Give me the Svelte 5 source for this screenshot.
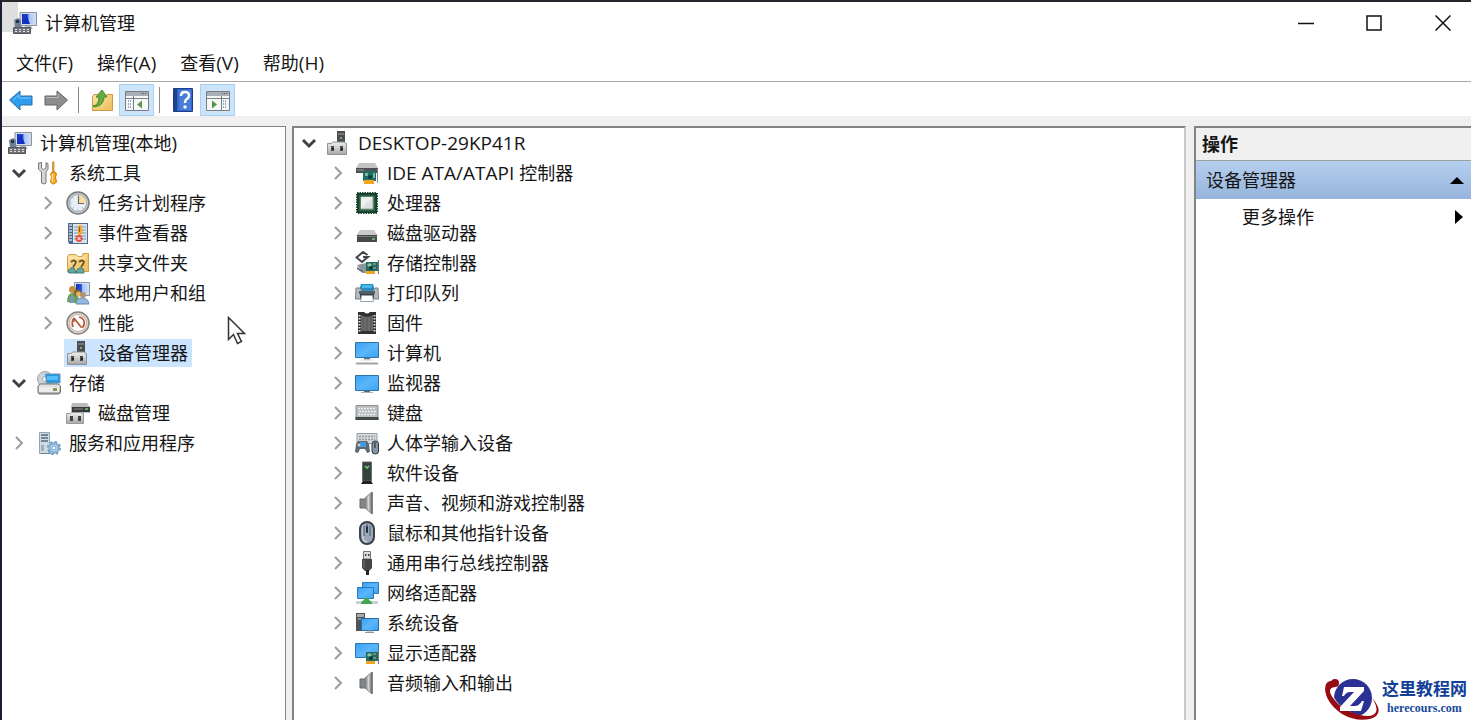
<script>
  let selected = $state('设备管理器');

  const menus = ['文件(F)', '操作(A)', '查看(V)', '帮助(H)'];

  // Latin runs are set one size up beside the Chinese characters.
  const runs = (label) => label.match(/[\x20-\x7e]+|[^\x20-\x7e]+/g);
  const isLatin = (run) => run.charCodeAt(0) < 128;

  const consoleTree = [
    { label: '计算机管理(本地)', icon: 'console', depth: 0 },
    { label: '系统工具', icon: 'tools', depth: 1, open: true },
    { label: '任务计划程序', icon: 'clock', depth: 2, open: false },
    { label: '事件查看器', icon: 'events', depth: 2, open: false },
    { label: '共享文件夹', icon: 'shared', depth: 2, open: false },
    { label: '本地用户和组', icon: 'users', depth: 2, open: false },
    { label: '性能', icon: 'gauge', depth: 2, open: false },
    { label: '设备管理器', icon: 'device', depth: 2 },
    { label: '存储', icon: 'storage', depth: 1, open: true },
    { label: '磁盘管理', icon: 'diskmgmt', depth: 2 },
    { label: '服务和应用程序', icon: 'services', depth: 1, open: false }
  ];

  const deviceTree = [
    { label: 'DESKTOP-29KP41R', icon: 'device', depth: 1, open: true },
    { label: 'IDE ATA/ATAPI 控制器', icon: 'ide', depth: 2, open: false },
    { label: '处理器', icon: 'cpu', depth: 2, open: false },
    { label: '磁盘驱动器', icon: 'disk', depth: 2, open: false },
    { label: '存储控制器', icon: 'storagectl', depth: 2, open: false },
    { label: '打印队列', icon: 'printer', depth: 2, open: false },
    { label: '固件', icon: 'firmware', depth: 2, open: false },
    { label: '计算机', icon: 'computer', depth: 2, open: false },
    { label: '监视器', icon: 'monitor', depth: 2, open: false },
    { label: '键盘', icon: 'keyboard', depth: 2, open: false },
    { label: '人体学输入设备', icon: 'hid', depth: 2, open: false },
    { label: '软件设备', icon: 'software', depth: 2, open: false },
    { label: '声音、视频和游戏控制器', icon: 'speaker', depth: 2, open: false },
    { label: '鼠标和其他指针设备', icon: 'mouse', depth: 2, open: false },
    { label: '通用串行总线控制器', icon: 'usb', depth: 2, open: false },
    { label: '网络适配器', icon: 'network', depth: 2, open: false },
    { label: '系统设备', icon: 'system', depth: 2, open: false },
    { label: '显示适配器', icon: 'display', depth: 2, open: false },
    { label: '音频输入和输出', icon: 'speaker', depth: 2, open: false }
  ];
</script>

<svg class="defs" aria-hidden="true">
  <defs>
    <linearGradient id="gBlue" x1="0" y1="0" x2="1" y2="1">
      <stop offset="0" stop-color="#3aa0f3" /><stop offset=".5" stop-color="#5bb6fa" /><stop offset="1" stop-color="#3ba4f5" />
    </linearGradient>
    <linearGradient id="gScreen" x1="0" y1="0" x2="1" y2="0">
      <stop offset="0" stop-color="#1230b8" /><stop offset=".45" stop-color="#2a55de" /><stop offset=".55" stop-color="#a9c4f5" /><stop offset="1" stop-color="#c9dcf8" />
    </linearGradient>
    <linearGradient id="gMetal" x1="0" y1="0" x2="1" y2="0">
      <stop offset="0" stop-color="#6d6d6d" /><stop offset=".5" stop-color="#d4d4d4" /><stop offset="1" stop-color="#6a6a6a" />
    </linearGradient>
    <linearGradient id="gGrey" x1="0" y1="0" x2="0" y2="1">
      <stop offset="0" stop-color="#efefef" /><stop offset="1" stop-color="#a8a8a8" />
    </linearGradient>
    <linearGradient id="gFolder" x1="0" y1="0" x2="1" y2="1">
      <stop offset="0" stop-color="#fbe3a4" /><stop offset="1" stop-color="#edbd5a" />
    </linearGradient>
  </defs>
</svg>

{#snippet text(label)}
  <span>{#each runs(label) as run}<span class:latin={isLatin(run)}>{run}</span>{/each}</span>
{/snippet}

{#snippet card()}
  <path d="M11 11h12v9H11z" fill="#256b62" />
  <path d="M23.5 9v14" stroke="#777" stroke-width="1.2" />
  <path d="M13 13h3v2h-3zM18 13h3M18 17h3" fill="#8fc7a6" stroke="#8fc7a6" stroke-width="1" />
  <circle cx="16" cy="17" r="2" fill="#123c3b" />
  <path d="M11 20h9v3h-9z" fill="#f0a520" />
{/snippet}

{#snippet icon(name)}
  <svg class="icon" viewBox="0 0 24 24" aria-hidden="true">
    {#if name === 'console'}
      <path d="M7 1.500h16.500v13H7z" fill="#d6dce6" stroke="#8792a4" />
      <path d="M9 3h13v10H9z" fill="url(#gScreen)" />
      <path d="M13 3l4 10h-7z" fill="#122fc0" />
      <path d="M1 9l4-2 3 2v6l3 2H2z" fill="#6f7f95" />
      <path d="M3 9h3v3H3z" fill="#22374f" />
      <path d="M12 15h6l2 3h-9z" fill="#b5bac2" />
      <path d="M.5 16.500h17v6H.5z" fill="#70747a" stroke="#54585d" />
      <path d="M2 18.500h14M2 20.500h14" stroke="#e1e1e1" stroke-width="1.200" stroke-dasharray="2 2" />
    {:else if name === 'tools'}
      <path d="M1.500 2v6l3 3v11q2.500 2 4.500 0V11l2-3V3L9 1.500V7L6.500 8.500 4.500 7V1.500z" fill="#d2d4d6" stroke="#75797c" />
      <path d="M15 1l1.200-1 1.300 1v11H15z" fill="#d99a42" />
      <path d="M13.500 13l1.500-2h3l1.500 2-1 3 1 5q-3 4-6 0l1-5z" fill="#f6a91e" stroke="#c77e0c" />
      <path d="M15.500 13v8" stroke="#ffe09a" stroke-width="1.500" />
    {:else if name === 'clock'}
      <circle cx="12" cy="12" r="11" fill="#c6c8ca" stroke="#777b7e" stroke-width="1.500" />
      <circle cx="12" cy="12" r="8.500" fill="#e6eef7" stroke="#a5abb1" />
      <path d="M12.500 12.500V4a8 8 0 0 1 7.500 8.500z" fill="#f8dca0" />
      <path d="M12.500 4.500v8H18" fill="none" stroke="#6a6d68" stroke-width="1.200" />
      <path d="M4.500 12h1M12 18.500v1M6.500 6.500l1 1M6.500 17.500l1-1M17.500 17.500l-1-1" stroke="#8f99a4" />
    {:else if name === 'events'}
      <path d="M2 2h20v21H3L2 20z" fill="#536a87" />
      <path d="M7 3h14v19H7z" fill="#d9e5f1" />
      <path d="M8 6h12M8 9h12M8 12h12M8 15h12M8 18h12" stroke="#7d91aa" />
      <path d="M3 4h3M3 7h3M3 10h3M3 13h3M3 16h3M3 19h3" stroke="#c7d4e4" stroke-width="1.500" />
      <path d="M12.500 4h3l1 7-2 3h-2l-1-4z" fill="#f5a82b" />
      <path d="M13.500 6v5" stroke="#8c520e" />
      <circle cx="13" cy="17.500" r="3.500" fill="#e65244" />
      <path d="M11.500 16l3 3m0-3l-3 3" stroke="#fff" />
    {:else if name === 'shared'}
      <path d="M1.500 5.500L3 3.500h7l2 2h4l1-3h5.500v18H1.500z" fill="url(#gFolder)" stroke="#d3a044" />
      <path d="M2 7h18" stroke="#fff0c2" />
      <path d="M5 11q3-3 5 0-1 3-3 5M13 11q3-3 5 0-1 3-3 5" fill="none" stroke="#695228" stroke-width="1.800" />
      <path d="M2 21q1-5 6-4l2 5H3zM10 22q1-6 6-5 2 0 2 5z" fill="#68a7a1" stroke="#427b7b" />
    {:else if name === 'users'}
      <path d="M8.500 1.500h15v13h-15z" fill="#d7e0ed" stroke="#8894a7" />
      <path d="M10 3h12v10H10z" fill="url(#gScreen)" />
      <circle cx="6.500" cy="8.500" r="3.500" fill="#c39043" />
      <path d="M1 21q0-9 6-9 5 0 6 8l-3 2z" fill="#66a359" />
      <circle cx="11.500" cy="12" r="3.500" fill="#7a6633" />
      <circle cx="12.500" cy="13" r="2.500" fill="#eab366" />
      <circle cx="17" cy="14" r="3" fill="#b4926a" />
      <path d="M10 23q0-6 6-6t7 6z" fill="#93badc" stroke="#5f8bb2" />
      <path d="M3 22l2-8 3 2-1 6z" fill="#8594bd" />
    {:else if name === 'gauge'}
      <circle cx="12" cy="12" r="11" fill="#d8d8d8" stroke="#88837e" stroke-width="1.500" />
      <circle cx="12" cy="12" r="8.500" fill="#fff" stroke="#c9a79b" />
      <path d="M7 16q-2-5 1-9M8 7l7 9h2q3-5-1-9l-3-1" fill="none" stroke="#b9562f" stroke-width="1.700" />
      <path d="M8 7v4" stroke="#b9562f" stroke-width="1.500" />
    {:else if name === 'device'}
      <path d="M11 0h8v12h-8z" fill="#4b4d4f" />
      <path d="M12 2h6v2h-6z" fill="#777" />
      <circle cx="15" cy="7" r="1" fill="#8ecb86" />
      <path d="M1.500 12.500h4l1-1.500h12l1 1.500h1v11h-19z" fill="url(#gGrey)" stroke="#929292" />
      <path d="M5 15h3v5H5zM14 15h3v5h-3z" fill="#4d4d4d" />
      <path d="M6 17h2v2H6zM15 17h2v2h-2z" fill="#222" />
    {:else if name === 'storage'}
      <circle cx="8" cy="8" r="7.500" fill="#cdd3d8" stroke="#9aa4ab" />
      <circle cx="8" cy="8" r="2.500" fill="#fff" stroke="#8faeb7" />
      <path d="M8.500 3h14.500v9H9.500z" fill="#229be6" stroke="#6f8fa7" />
      <path d="M10 5h11v4H10z" fill="#57bdfa" />
      <path d="M3 13h18l2.500 2v6q0 2-3 2H3q-2 0-2-2v-6z" fill="url(#gGrey)" stroke="#6d6d6d" />
      <path d="M2 16h20v5H2z" fill="#ececec" />
      <path d="M16 17h4v3h-4z" fill="#83964b" />
    {:else if name === 'diskmgmt'}
      <path d="M6 2h15l3 4v6H5V6z" fill="#b9bcbe" />
      <path d="M6 6h18v5H6z" fill="#383b3d" />
      <path d="M8 8h9" stroke="#8a8a8a" /><path d="M19 8h3" stroke="#7ccc72" stroke-width="1.500" />
      <path d="M.5 12.500h4l1-1h9l1 1h2v10H.5z" fill="url(#gGrey)" stroke="#9b9b9b" />
      <path d="M4 15h3v5H4zM12 15h3v5h-3z" fill="#414141" />
    {:else if name === 'services'}
      <path d="M2.500 1.500h10v21h-10z" fill="#cfdbe2" stroke="#94a5b1" />
      <path d="M4 4h7M4 7h7M4 10h7" stroke="#536b78" stroke-width="1.500" />
      <path d="M4 14h3v6H4z" fill="#9cafbd" />
      <path d="M4 22.500h10" stroke="#6a7f8c" />
      <circle cx="17" cy="17" r="4.500" fill="#dcecf8" stroke="#8bb3d6" stroke-width="3" />
      <circle cx="17" cy="17" r="6.300" fill="none" stroke="#659bc9" stroke-width="1.500" stroke-dasharray="2.500 2.450" />
      <circle cx="17" cy="17" r="2" fill="#fff" stroke="#659bc9" />
    {:else if name === 'ide'}
      <path d="M4 2h16l3 5H1z" fill="#c2c3c4" />
      <path d="M1 7h22v5H1z" fill="#4d5052" />
      <path d="M2 9h7" stroke="#999" />
      <path d="M8 10h13v10H8z" fill="#206c66" /><path d="M22.500 8v14" stroke="#7b858a" />
      <path d="M10 12h3v3h-3zM18 12h2v5h-2z" fill="#79b796" /><circle cx="15" cy="16" r="2" fill="#103e40" />
      <path d="M9 19h10v4H9z" fill="#f5a51d" />
    {:else if name === 'cpu'}
      <path d="M2 2h20v20H2z" fill="#174d33" stroke="#174d33" stroke-width="2" stroke-dasharray="1.500 1" />
      <path d="M3 3h18v18H3z" fill="#2a6041" stroke="#102c20" />
      <path d="M6 6h12v12H6z" fill="#dce1df" stroke="#93a39d" />
      <path d="M6 6h12L6 18z" fill="#eef1f0" />
    {:else if name === 'disk'}
      <path d="M5 9h14l4 6H1z" fill="#c9c9c9" />
      <path d="M2 14h20v7H2z" fill="#46484a" />
      <path d="M2 15.500h20" stroke="#777" /><path d="M17 18h3" stroke="#78d675" stroke-width="1.500" />
    {:else if name === 'storagectl'}
      <path d="M2 14l9-2v10H8z" fill="#8d979b" /><path d="M2 16l6 4v2l-6-4z" fill="#5c676a" />
      {@render card()}
      <path d="M12.500 4L8 1 1.500 6.500 7 11l6-5H8" fill="none" stroke="#424548" stroke-width="2" />
    {:else if name === 'printer'}
      <path d="M6 3h12l2 7H4z" fill="#268bc5" /><path d="M7 4h10v3H7z" fill="#4db4e8" />
      <path d="M1 7h4l2 3h11l2-3h3l.5 11H.5z" fill="#b6bbbf" stroke="#777f86" />
      <path d="M4 10h16v3H4z" fill="#52606b" /><path d="M5 13h14v5H5z" fill="#373f45" />
      <path d="M6.500 14.500h11l1 6h-13z" fill="#fff" stroke="#9da4a9" />
    {:else if name === 'firmware'}
      <path d="M3 1h6q3 3 6 0h6v22H3z" fill="#303030" />
      <path d="M6 4q6 4 12 0v16H6z" fill="#6b6b6b" />
      <path d="M4.500 4v18M19.500 4v18" stroke="#e0e0e0" stroke-width="2" stroke-dasharray="1.500 1.500" />
      <path d="M8 6v14M12 7v13M16 6v14" stroke="#5d5d5d" stroke-width="1.500" />
    {:else if name === 'computer'}
      <path d="M.5 1.500h23v15H.5z" fill="url(#gBlue)" stroke="#2e75aa" />
      <path d="M9 17h6v1.500H9z" fill="#5d7180" /><path d="M6 19h12" stroke="#d1d5d8" />
      <path d="M1.500 21.500h21l1 2H.5z" fill="#9ba3a9" />
    {:else if name === 'monitor'}
      <path d="M.5 4.500h23v15H.5z" fill="url(#gBlue)" stroke="#2e75aa" />
      <path d="M9 20h6v1H9z" fill="#52697b" /><path d="M6 21.500h12" stroke="#aab4bb" />
    {:else if name === 'keyboard'}
      <path d="M1 4.500h22v14H1z" fill="#b9bdc0" stroke="#8d9295" />
      <path d="M.5 16h23v3H.5z" fill="#44494c" />
      <path d="M3 7.500h18M3 13.500h18" stroke="#f1f1f1" stroke-width="1.500" stroke-dasharray="2 1" /><path d="M4 10.500h17" stroke="#f1f1f1" stroke-width="1.500" stroke-dasharray="2 1" />
    {:else if name === 'hid'}
      <path d="M2 2.500h20v10H2z" fill="#d5d8da" stroke="#979ca0" /><path d="M4 5.500h16M4 8.500h16" stroke="#94999d" stroke-width="1.500" stroke-dasharray="2 1" />
      <path d="M1 13l2-3h9l2 3 1 8-3 1-2-4H5l-2 4-3-1z" fill="#5e6970" />
      <path d="M5 11h6v5H5z" fill="#3b9ce3" /><circle cx="4" cy="14" r="1.500" fill="#d0d0d0" />
      <rect x="17" y="10" width="6.500" height="13" rx="3" fill="#8495a7" stroke="#34383c" /><path d="M20 11v6" stroke="#222" />
    {:else if name === 'software'}
      <path d="M7.500 1h9v19h-9z" fill="#2c3a36" stroke="#65706c" /><path d="M8 2h8v17H8z" fill="#35433e" />
      <path d="M10 5l2 2 2-2" fill="none" stroke="#6edb75" stroke-width="1.500" /><path d="M8 20h8l2 3H6z" fill="#1d2321" />
    {:else if name === 'speaker'}
      <path d="M5 8h5v9H5z" fill="#81888d" stroke="#62686b" /><path d="M10 7L17 1v22l-7-6z" fill="url(#gMetal)" stroke="#8a8a8a" />
      <path d="M17 1v22" fill="none" stroke="#6c6f71" stroke-width="1.500" />
    {:else if name === 'mouse'}
      <rect x="5" y="1" width="14" height="22" rx="7" fill="#9aa7b8" stroke="#3b4047" stroke-width="2" />
      <path d="M8 4v14q1 3 4 3" fill="none" stroke="#c5ccd5" stroke-width="1.500" /><path d="M12 3v8M9 5v10M15 5v10" stroke="#4b576a" /><rect x="11" y="5" width="2" height="7" rx="1" fill="#252d3b" />
    {:else if name === 'usb'}
      <path d="M8.500.5h7V8h-7z" fill="#ddd" stroke="#737373" /><path d="M10 3h1.500v2H10zM13 3h1.500v2H13z" fill="#444" />
      <path d="M7 8h10v9l-3 3h-4l-3-3z" fill="#454545" /><path d="M9 9v8" stroke="#747474" /><path d="M11 19h3v5h-3z" fill="#242424" />
    {:else if name === 'network'}
      <path d="M7.500 1.500h16v11h-16z" fill="url(#gBlue)" stroke="#2b79b6" /><path d="M2.500 6.500h16v11h-16z" fill="url(#gBlue)" stroke="#2b79b6" />
      <path d="M1 20h22v3H1z" fill="#cbd1d2" /><path d="M9 17h5v2q3 1 3 4H6q0-3 3-4z" fill="#43a64d" />
    {:else if name === 'system'}
      <path d="M1 2h9v18H1z" fill="#4d535b" /><path d="M2 3h7v3H2z" fill="#a8adb1" /><path d="M3 8h5" stroke="#c0c5c9" />
      <path d="M6.500 7.500h17v12h-17z" fill="url(#gBlue)" stroke="#2c6d9f" /><path d="M12 20h6M10 21.500h9" stroke="#8e989f" />
    {:else if name === 'display'}
      <path d="M.5 2.500h23v14H.5z" fill="url(#gBlue)" stroke="#2e75aa" />{@render card()}
    {/if}
  </svg>
{/snippet}

{#snippet tree(nodes, label)}
  <ul class="tree" aria-label={label}>
    {#each nodes as node}
      <li class="row depth{node.depth}">
        {#if node.depth > 0}
          <span class="twisty" class:open={node.open}>
            {#if node.open !== undefined}
              <svg viewBox="0 0 16 16" aria-hidden="true">
                <path d={node.open ? 'M2 5l6 6 6-6' : 'M5 2l6 6-6 6'} />
              </svg>
            {/if}
          </span>
        {/if}
        <button class="node" class:selected={selected === node.label} onclick={() => (selected = node.label)}>
          {@render icon(node.icon)}
          {@render text(node.label)}
        </button>
      </li>
    {/each}
  </ul>
{/snippet}

<div class="window">
  <header class="titlebar">
    {@render icon('console')}
    <h1>计算机管理</h1>
    <div class="controls">
      <button aria-label="最小化"><svg viewBox="0 0 16 16"><path d="M0 8.500h16" /></svg></button>
      <button aria-label="最大化"><svg viewBox="0 0 16 16"><path d="M1 1h14v14H1z" /></svg></button>
      <button aria-label="关闭"><svg viewBox="0 0 16 16"><path d="M.5.5l15 15M15.500.5l-15 15" /></svg></button>
    </div>
  </header>

  <nav class="menubar">
    {#each menus as menu}<button>{@render text(menu)}</button>{/each}
  </nav>

  <div class="toolbar">
    <button aria-label="后退"><svg viewBox="0 0 24 24"><path d="M.5 12L11 3v5h12v9H11v5z" fill="#2d9cec" stroke="#2a6ea6" /><path d="M4 12l6-5v3h12" fill="none" stroke="#77c5fa" /></svg></button>
    <button aria-label="前进"><svg viewBox="0 0 24 24"><path d="M23.500 12L13 3v5H1v9h12v5z" fill="#8d8d8d" stroke="#626262" /><path d="M2 9.500h12V6" fill="none" stroke="#bbb" /></svg></button>
    <span class="separator"></span>
    <button aria-label="上移一级"><svg viewBox="0 0 24 24"><path d="M2.500 8.500L4 6.500h6l2 2h4l1-2h5.500v16h-20z" fill="url(#gFolder)" stroke="#c99b45" /><path d="M3 18q6-1 6-9H6l6-7 5 7h-3q0 8-9 10z" fill="#63ad43" stroke="#4b8930" /></svg></button>
    <button class="pressed" aria-label="显示或隐藏控制台树"><svg viewBox="0 0 24 24"><path d="M.5 3.500h23v19H.5z" fill="#f7f7f7" stroke="#777f85" /><path d="M1 4h22v4H1z" fill="#a9afb4" /><path d="M16 5.500h6" stroke="#4b5761" stroke-dasharray="1 1" /><path d="M8.500 8v14M1 10.500h22" stroke="#777f85" /><path d="M3 13h4M3 16h4M3 19h4" stroke="#6790b5" stroke-width="1.500" stroke-dasharray="1 1" /><path d="M17 12.500v8L12 16.500z" fill="#5d9650" /></svg></button>
    <span class="separator"></span>
    <button aria-label="帮助"><svg viewBox="0 0 24 24"><path d="M2.500.5h19v23h-19z" fill="#3467c9" stroke="#1c3d85" /><path d="M3 1h3v22H3z" fill="#233f8b" /><path d="M8 2h12v20H8z" fill="#477dd9" /><path d="M10 8q0-4 4-4 4 0 4 3.500 0 2-2 3.500-2 1-2 4" fill="none" stroke="#fff" stroke-width="2.500" /><circle cx="14" cy="19" r="1.700" fill="#fff" /></svg></button>
    <button class="pressed" aria-label="显示或隐藏操作窗格"><svg viewBox="0 0 24 24"><path d="M.5 3.500h23v19H.5z" fill="#f7f7f7" stroke="#777f85" /><path d="M1 4h22v4H1z" fill="#a9afb4" /><path d="M16 5.500h6" stroke="#4b5761" stroke-dasharray="1 1" /><path d="M15.500 8v14M1 10.500h22" stroke="#777f85" /><path d="M17 13h4M17 16h4M17 19h4" stroke="#6790b5" stroke-width="1.500" stroke-dasharray="1 1" /><path d="M6 12.500v8l5-4z" fill="#4b9b38" /></svg></button>
  </div>

  <main class="panes">
    <section class="pane console">
      {@render tree(consoleTree, '控制台树')}
    </section>
    <section class="pane devices">
      {@render tree(deviceTree, '设备')}
    </section>
    <aside class="pane actions">
      <h2>操作</h2>
      <button class="group">设备管理器<svg viewBox="0 0 14 8" aria-hidden="true"><path d="M0 8l7-7 7 7z" /></svg></button>
      <button class="more">更多操作<svg viewBox="0 0 8 14" aria-hidden="true"><path d="M0 0l8 7-8 7z" /></svg></button>
    </aside>
  </main>

  <svg class="pointer" viewBox="0 0 20 30" aria-hidden="true">
    <path d="M1.500 1.500v22l5-5 4 9 4-2-4-8h7z" fill="#fff" stroke="#333" stroke-width="1.500" />
  </svg>

  <div class="brand">
    <svg viewBox="0 0 60 44" aria-hidden="true">
      <circle cx="31" cy="22" r="19" fill="#2b3192" />
      <path d="M9 10Q10 27 28 36q14 6 24 4l-2 4H30Q8 38 4 18z" fill="#fff" />
      <path d="M14 5Q3 3 3 13q1 14 17 25 14 8 28 5 11-3 8-12-2-5-6-9 6 9 4 14-3 6-16 3-18-4-27-17Q4 12 13 11z" fill="#970b13" />
      <circle cx="13" cy="7" r="4" fill="#970b13" />
      <path d="M22 11h20v4L28 30h5q4 0 7-5h2l-3 10H18v-4l14-15h-4q-4 0-6 4h-2z" fill="#fff" />
    </svg>
    <div class="words"><strong>这里教程网</strong><span>herecours.com</span></div>
  </div>
</div>

<style>
  :global(body) { background: #f0f0f0; }
  * { box-sizing: border-box; }
  .defs { position: absolute; width: 0; height: 0; }
  .window {
    position: relative;
    display: flex;
    flex-direction: column;
    min-height: 100vh;
    border-top: 2px solid #25252b;
    border-left: 2px solid #1b1e33;
    background: #f0f0f0;
    color: #161616;
    font: 18px/30px "Open Sans", "Noto Sans CJK SC", sans-serif;
    overflow: hidden;
  }
  button {
    display: flex;
    align-items: center;
    margin: 0;
    padding: 0;
    border: 0;
    background: none;
    color: inherit;
    font: inherit;
    white-space: nowrap;
  }
  h1, h2 { margin: 0; font: inherit; }
  svg { display: block; flex: none; }
  .icon { width: 24px; height: 24px; }
  .latin { font-size: 19px; white-space: pre; }

  .titlebar { display: flex; align-items: center; gap: 8px; height: 42px; padding-left: 11px; background: linear-gradient(90deg, #dfdfdf 16px, #fff 16px) 0 0 / 100% 30px no-repeat #fff; }
  .controls { display: flex; margin-left: auto; }
  .controls button { justify-content: center; width: 68px; height: 42px; }
  .controls button:last-child { padding-left: 2px; margin-right: -5px; }
  .controls svg { width: 16px; height: 16px; fill: none; stroke: #111; stroke-width: 1.5; }

  .menubar { display: flex; gap: 24px; height: 38px; padding: 1px 0 0 14px; align-items: center; border-bottom: 1px solid #a8a8a8; background: #fff; }
  .toolbar { display: flex; align-items: center; height: 34px; padding: 2px 1px 0; background: #fff; }
  .toolbar button { justify-content: center; width: 35px; height: 32px; }
  .toolbar svg { width: 24px; height: 24px; }
  .toolbar .pressed { background: #cce4f9; border: 1px solid #a6d0f4; }
  .separator { width: 1px; height: 26px; margin: 0 5px; background: #8b8b8b; }

  .panes { display: grid; grid-template-columns: 284px 1fr 277px; flex: 1; padding-top: 10px; }
  .pane { border: 2px solid #838383; border-bottom: 0; background: #fff; }
  .console { border-left: 0; border-right-width: 1px; border-top-width: 1px; padding: 1px 0 0 1px; }
  .devices { margin: 0 8px 0 6px; border-right-color: #c8c8c8; }
  .devices .depth1 { padding-left: 7px; }
  .devices .depth2 { padding-left: 36px; }
  .devices .node { padding-left: 1px; }
  .actions { border-right: 0; }

  .tree { margin: 0; padding: 0; list-style: none; }
  .row { display: flex; height: 30px; }
  .depth0 { padding-left: 3px; }
  .depth1 { padding-left: 8px; }
  .depth2 { padding-left: 37px; }
  .twisty { display: flex; align-items: center; width: 24px; }
  .twisty svg { width: 16px; height: 16px; fill: none; stroke: #9c9c9c; stroke-width: 2; }
  .twisty.open svg { stroke: #424242; stroke-width: 3; }
  .node { gap: 8px; height: 28px; margin-top: 1px; padding: 0 4px 0 2px; }
  .selected { background: #cce5ff; }

  .actions h2 { height: 33px; padding: 1px 6px; border-bottom: 1px solid #a0a0a0; background: #f0f0f0; font-weight: 700; }
  .actions button { width: 100%; height: 36px; justify-content: space-between; }
  .actions .group { height: 38px; padding: 0 7px 0 10px; background: linear-gradient(#b5cfee, #96b4dc); }
  .actions .group svg { width: 14px; height: 8px; }
  .actions .more { padding: 0 8px 0 46px; }
  .actions .more svg { width: 8px; height: 14px; }

  .pointer { position: absolute; left: 225px; top: 314px; width: 20px; height: 30px; }
  .brand { position: absolute; right: 4px; bottom: 0; display: flex; align-items: center; }
  .brand > svg { width: 60px; height: 44px; }
  .words { display: flex; flex-direction: column; align-items: center; color: #16499a; white-space: nowrap; }
  .words strong { font: 700 17px/20px "Liberation Serif", "Noto Sans CJK SC", serif; color: #123f97; }
  .words span { font: 700 12px/16px "Liberation Serif", serif; }
</style>
